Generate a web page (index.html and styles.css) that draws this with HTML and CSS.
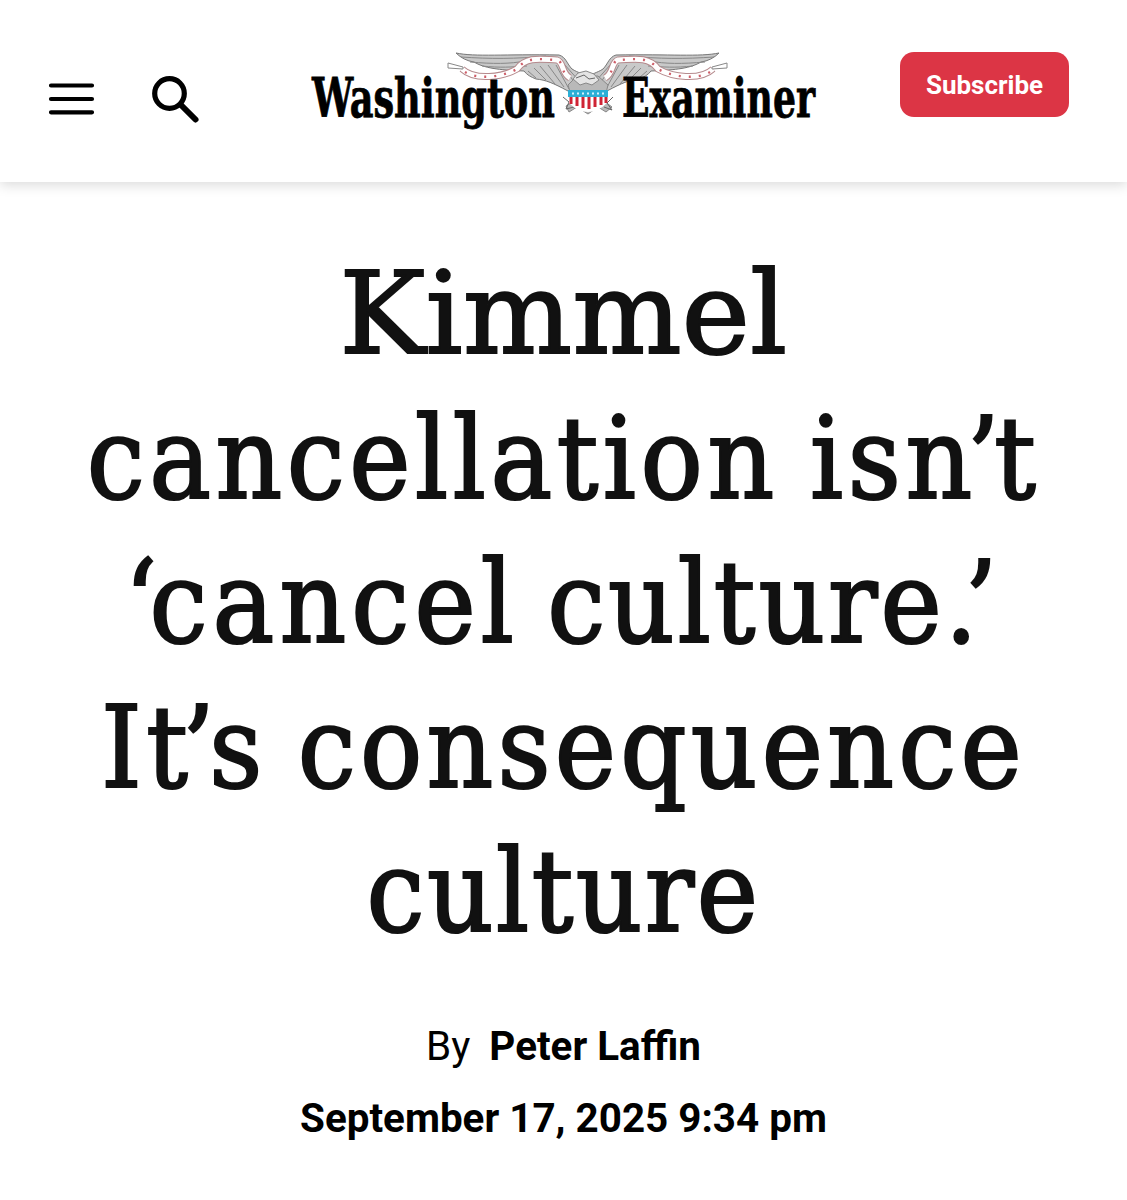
FILE: index.html
```html
<!DOCTYPE html>
<html lang="en">
<head>
<meta charset="utf-8">
<title>Kimmel cancellation isn’t ‘cancel culture.’ It’s consequence culture</title>
<link rel="stylesheet" href="styles.css">
</head>
<body>
<header class="site-header">
  <button class="icon-button menu" aria-label="Menu">
    <svg width="46" height="34" viewBox="0 0 46 34"><path d="M3 4.500h41M3 18h41M3 31.300h41" stroke="#000" stroke-width="4.200" stroke-linecap="round"/></svg>
  </button>
  <button class="icon-button search" aria-label="Search">
    <svg width="50" height="50" viewBox="0 0 50 50" fill="none" stroke="#000"><circle cx="18.500" cy="18.500" r="14.800" stroke-width="5.200"/><path d="M30 30L44.500 44.500" stroke-width="6" stroke-linecap="round"/></svg>
  </button>
  <a class="logo" aria-label="Washington Examiner">
    <svg width="510" height="90" viewBox="308 48 510 90">
      <defs>
        <g id="wing">
          <path d="M456 53C475 57 505 54 559 55C566 57 567 64 572 69C578 73 583 73 587 78L580 96L568 91C553 83 546 80 536 79C531 77 527 75 524 71C498 70 484 68 474 62C467 61 461 58 456 53Z" fill="#c9c9c9" stroke="#777" stroke-width="1"/>
          <path d="M461 57C490 59 516 59 546 56M470 62C493 64 510 64 525 61M482 66C500 68 512 67 527 66M528 71l8 7M534 68l12 12M540 66l15 18M548 65l16 22M556 65l13 24M558 58l18 27M564 64l16 18" fill="none" stroke="#888" stroke-width="1"/>
          <path d="M462 69C475 81 503 77 517 69C527 55 545 60 557 60C564 62 561 73 570 78" fill="none" stroke="#b58a8d" stroke-width="7"/>
          <path d="M462 69C475 81 503 77 517 69C527 55 545 60 557 60C564 62 561 73 570 78" fill="none" stroke="#fff" stroke-width="5"/>
          <path d="M465 72C478 80 503 77 517 69C527 55 545 60 557 60C564 62 561 73 568 76" fill="none" stroke="#cf5d68" stroke-width="2.400" stroke-dasharray="2 8"/>
          <path d="M463 67l-15-4v5l15 1z" fill="#fff" stroke="#888"/>
        </g>
      </defs>
      <use href="#wing"/>
      <use href="#wing" transform="matrix(-1 0 0 1 1175 0)"/>
      <path d="M568 85l9-9 21 0 10 9-4 16 8 6-6 5-8-5-10 7-11-7-8 5-3-6 7-4z" fill="#b9b9b9" stroke="#888"/>
      <path d="M573 79l5-6 8-2 8 3 5 6-7 5-6-2-6 2z" fill="#e4e4e4" stroke="#888"/>
      <path d="M576 78l8-3 5 4 6-1M563 97l6 5-3 7 8-2M613 97l-6 6 5 7-8-3" fill="none" stroke="#666"/>
      <path d="M569 96h38v7q-9 9-19 9t-19-9z" fill="#fff"/>
      <path d="M571 97v7M577 97v9M583 97v11M589 97v12M595 97v10M601 97v8M606 97v6" stroke="#cf2435" stroke-width="3"/>
      <path d="M568 90h40v7h-40z" fill="#2dafd6"/>
      <path d="M572 93.500h34" stroke="#d5f3ff" stroke-width="2" stroke-dasharray="2 3"/>
      <text class="wordmark" x="312" y="117" textLength="243" lengthAdjust="spacingAndGlyphs">Washington</text>
      <text class="wordmark" x="622" y="117" textLength="193" lengthAdjust="spacingAndGlyphs">Examiner</text>
    </svg>
  </a>
  <button class="subscribe">Subscribe</button>
</header>
<main class="article">
  <h1 class="headline">
    <span class="line first">Kimmel</span>
    <span class="line second">cancellation isn<span class="apostrophe">’</span>t</span>
    <span class="line third"><span class="open-quote">‘</span>cancel <span class="tight">culture.</span><span class="close-quote">’</span></span>
    <span class="line">It<span class="apostrophe">’</span>s consequence</span>
    <span class="line last">culture</span>
  </h1>
  <p class="byline">By <strong class="author">Peter Laffin</strong></p>
  <p class="date">September 17, 2025 9:34 pm</p>
</main>
</body>
</html>
```
FILE: styles.css
```css
* { box-sizing: border-box; }
body { margin: 0; background: #fff; color: #000; font-family: Roboto, sans-serif; }
.site-header { display: flex; align-items: flex-start; height: 182px; padding-left: 48px; box-shadow: 0 3px 12px rgba(0,0,0,.15); }
.icon-button { padding: 0; border: 0; background: none; }
.icon-button svg, .logo svg { display: block; overflow: visible; }
.menu { margin-top: 81px; }
.search { margin: 75px 0 0 57px; }
.logo { margin: 48px 0 0 107px; }
.wordmark { font-family: "DejaVu Serif Condensed", "DejaVu Serif", serif; font-stretch: condensed; font-weight: 700; font-size: 55px; stroke: #000; stroke-width: .8px; }
.subscribe { margin: 52px 0 0 82px; width: 169px; height: 65px; padding: 0; border: 0; border-radius: 14px; background: #dc3545; color: #fff; font: 700 26px/66px Roboto, sans-serif; }
.article { text-align: center; }
.headline { margin: 59px 0 0; color: #111; font: 400 115px/144.5px "Roboto Slab", "DejaVu Serif Condensed", "DejaVu Serif", serif; font-stretch: condensed; letter-spacing: 4.3px; word-spacing: -6px; -webkit-text-stroke: 2.2px #111; }
.line { display: block; white-space: nowrap; }
.first { font-family: "Roboto Slab", "DejaVu Serif", serif; font-stretch: normal; letter-spacing: .4px; }
.second { letter-spacing: 4.6px; }
.third { letter-spacing: 5.2px; word-spacing: -10px; }
.tight { letter-spacing: 3px; }
.last { letter-spacing: 2.5px; }
.apostrophe { margin: 0 -10px 0 -10px; }
.open-quote { margin-right: -13px; }
.close-quote { margin-left: -16px; }
.byline, .date { margin: 0; font-size: 40.4px; line-height: 72px; }
.byline { margin-top: 47px; }
.author { margin-left: 9px; }
.date { font-weight: 700; }
```
